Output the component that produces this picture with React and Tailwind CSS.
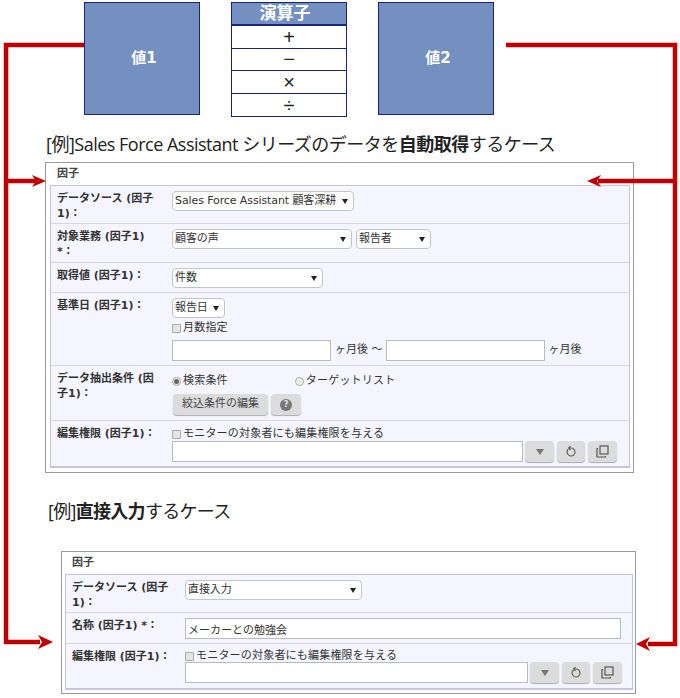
const jp = "font-['DejaVu_Sans','Noto_Sans_CJK_JP',sans-serif]";

function ValueBox({ label }) {
  return (
    <div className="flex h-[113px] w-[116px] items-center justify-center border border-[#1a237e] bg-[#7390c0] pl-[4px] text-[15px] font-bold text-white">
      {label}
    </div>
  );
}

function OperatorTable() {
  return (
    <div className="flex h-[115px] w-[116px] flex-col overflow-hidden border border-[#1a237e] bg-white">
      <div className="flex h-[23px] shrink-0 items-center justify-center border-b-2 border-[#1a237e] bg-[#7390c0] pr-[8px] text-[17px] font-bold leading-none text-white">
        演算子
      </div>
      {["+", "−", "×", "÷"].map((op, i) => (
        <div
          key={op}
          className={`flex h-[22.500px] shrink-0 items-center justify-center font-['Liberation_Sans',sans-serif] text-[20px] leading-none text-[#222] ${i < 3 ? "border-b border-[#1a237e]" : ""}`}
        >
          {op}
        </div>
      ))}
    </div>
  );
}

function Select({ value, width }) {
  return (
    <div
      className="flex h-[20px] shrink-0 items-center justify-between rounded-sm border border-[#c4c4c4] bg-white pl-[2px] pr-[5px] text-[11px] tracking-[-0.1px] text-[#333]"
      style={{ width }}
    >
      <span className="whitespace-nowrap">{value}</span>
      <svg width="6" height="5" viewBox="0 0 6 5" className="ml-1 shrink-0">
        <path d="M0 0h6L3 5z" fill="#222" />
      </svg>
    </div>
  );
}

function TextBox({ width, height = 21, value = "" }) {
  return (
    <input
      type="text"
      readOnly
      value={value}
      className="shrink-0 border border-[#bbb] bg-white pl-[2px] text-[11px] text-[#333]"
      style={{ width, height }}
    />
  );
}

function Check({ label }) {
  return (
    <div className="flex h-[14px] items-center gap-[1px] text-[11px] tracking-[0.2px] text-[#333]">
      <span className="h-[9px] w-[9px] rounded-[1px] border border-[#aaa] bg-[#e4e4e4]" />
      <span className="ml-[1px] whitespace-nowrap">{label}</span>
    </div>
  );
}

function Radio({ label, checked }) {
  return (
    <div className="flex items-center gap-[2px] text-[11px] tracking-[0.2px] text-[#333]">
      <span className="flex h-[9px] w-[9px] items-center justify-center rounded-full border border-[#aaa] bg-[#eee]">
        {checked && <span className="h-[5px] w-[5px] rounded-full bg-[#666]" />}
      </span>
      <span className="whitespace-nowrap">{label}</span>
    </div>
  );
}

function GrayButton({ width, children }) {
  return (
    <div
      className="flex h-[21px] shrink-0 items-center justify-center rounded-sm bg-[#dcdcdc] text-[11px] text-[#444] shadow-[0_1px_1px_rgba(0,0,0,0.3)]"
      style={{ width }}
    >
      {children}
    </div>
  );
}

function Row({ label, height, last, labelWidth, children }) {
  return (
    <div
      className={`flex ${last ? "" : "border-b border-[#d4d6ee]"}`}
      style={{ height }}
    >
      <div
        className="shrink-0 whitespace-nowrap pl-[6px] pt-[5px] text-[11px] font-bold leading-[15px] text-[#333]"
        style={{ width: labelWidth }}
      >
        {label}
      </div>
      <div className="flex min-w-0 flex-1 flex-col pt-[5px]">{children}</div>
    </div>
  );
}

function Permission({ inputWidth, checkOffset, inputGap }) {
  return (
    <div className="flex flex-col" style={{ marginTop: checkOffset }}>
      <Check label="モニターの対象者にも編集権限を与える" />
      <div className="flex items-center" style={{ marginTop: inputGap }}>
        <TextBox width={inputWidth} />
        <div className="ml-[2px] flex gap-[3px]">
          <GrayButton width={29}>
            <svg width="8" height="6" viewBox="0 0 8 6">
              <path d="M0 0h8L4 6z" fill="#777" />
            </svg>
          </GrayButton>
          <GrayButton width={28}>
            <svg width="12" height="12" viewBox="0 0 12 12" fill="none" stroke="#555" strokeWidth="1.1">
              <path d="M3.4 3A4 4 0 1 0 6 2H4" />
              <path d="M5.5 0.2L3.6 2l1.9 1.8" />
            </svg>
          </GrayButton>
          <GrayButton width={29}>
            <svg width="13" height="13" viewBox="0 0 13 13" fill="none" stroke="#555" strokeWidth="1.2">
              <rect x="4" y="1" width="8" height="8" />
              <path d="M2 3.5H1V12h8.500v-1" />
            </svg>
          </GrayButton>
        </div>
      </div>
    </div>
  );
}

function Panel({ outerClass, innerClass, titleClass, children }) {
  return (
    <div className={`border border-[#9a9a9a] bg-white ${outerClass}`}>
      <div className={`flex h-[22px] items-center text-[11px] font-bold text-[#444] ${titleClass}`}>因子</div>
      <div className={`border border-b-2 border-[#c3c6de] bg-[#f4f5ff] ${innerClass}`}>{children}</div>
    </div>
  );
}

function Arrows() {
  return (
    <svg className="pointer-events-none absolute inset-0" width="680" height="698" viewBox="0 0 680 698" fill="none">
      <g stroke="#c00000" strokeWidth="4.500">
        <path d="M84 45H6V642H40" />
        <path d="M6 181H36" />
        <path d="M506 45H675V644H648" />
        <path d="M675 181H598" />
      </g>
      <g fill="#c00000">
        <path d="M46 181L32 175L36 181L32 187z" />
        <path d="M53 642L38 635L42 642L38 649z" />
        <path d="M587 181L601 175L597 181L601 187z" />
        <path d="M636 644L650 637L646 644L650 651z" />
      </g>
    </svg>
  );
}

export default function App() {
  return (
    <div className={`relative h-[698px] w-[680px] overflow-hidden bg-white ${jp}`}>
      <div className="flex gap-[31px] pl-[84px] pt-[2px]">
        <ValueBox label="値1" />
        <OperatorTable />
        <ValueBox label="値2" />
      </div>

      <div className="ml-[46px] mt-[14px] h-[31px] whitespace-nowrap font-['Open_Sans','Noto_Sans_CJK_JP',sans-serif] text-[18px] leading-[26px] tracking-[-0.5px] text-[#222]">
        [例]Sales Force Assistant シリーズのデータを<b>自動取得</b>するケース
      </div>

      <Panel outerClass="ml-[45px] h-[311px] w-[589px] pl-[4px] pr-[3px]" innerClass="h-[283px]" titleClass="pl-[7px]">
        <Row label={<>データソース (因子<br />1)：</>} height={38} labelWidth={121}>
          <Select value="Sales Force Assistant 顧客深耕" width={182} />
        </Row>
        <Row label={<>対象業務 (因子1)<br />*：</>} height={39} labelWidth={121}>
          <div className="flex gap-[4px]">
            <Select value="顧客の声" width={180} />
            <Select value="報告者" width={75} />
          </div>
        </Row>
        <Row label="取得値 (因子1)：" height={30} labelWidth={121}>
          <Select value="件数" width={151} />
        </Row>
        <Row label="基準日 (因子1)：" height={73} labelWidth={121}>
          <Select value="報告日" width={53} />
          <div className="mt-[3px]">
            <Check label="月数指定" />
          </div>
          <div className="mt-[5px] flex items-center text-[11px] text-[#333]">
            <TextBox width={159} />
            <span className="ml-[4px]">ヶ月後 ～</span>
            <span className="ml-[3px]">
              <TextBox width={159} />
            </span>
            <span className="ml-[4px]">ヶ月後</span>
          </div>
        </Row>
        <Row label={<>データ抽出条件 (因<br />子1)：</>} height={55} labelWidth={121}>
          <div className="mt-[3px] flex h-[14px] items-center gap-[67px]">
            <Radio label="検索条件" checked />
            <Radio label="ターゲットリスト" />
          </div>
          <div className="ml-[1px] mt-[6px] flex gap-[3px]">
            <GrayButton width={95}>絞込条件の編集</GrayButton>
            <GrayButton width={30}>
              <span className="flex h-[12px] w-[12px] items-center justify-center rounded-full bg-[#777] text-[9px] font-bold text-[#ddd]">?</span>
            </GrayButton>
          </div>
        </Row>
        <Row label="編集権限 (因子1)：" height={46} labelWidth={121} last>
          <Permission inputWidth={351} checkOffset={1} inputGap={0} />
        </Row>
      </Panel>

      <div className="ml-[48px] mt-[25px] h-[26px] whitespace-nowrap font-['Open_Sans','Noto_Sans_CJK_JP',sans-serif] text-[18px] leading-[26px] tracking-[-0.7px] text-[#222]">
        [例]<b>直接入力</b>するケース
      </div>

      <Panel outerClass="ml-[61px] mt-[27px] h-[143px] w-[575px] pl-[3px] pr-[2px]" innerClass="h-[116px]" titleClass="pl-[7px]">
        <Row label={<>データソース (因子<br />1)：</>} height={38} labelWidth={119}>
          <Select value="直接入力" width={177} />
        </Row>
        <Row label="名称 (因子1) *：" height={31} labelWidth={119}>
          <TextBox width={436} value="メーカーとの勉強会" />
        </Row>
        <Row label="編集権限 (因子1)：" height={45} labelWidth={119} last>
          <Permission inputWidth={343} checkOffset={0} inputGap={-1} />
        </Row>
      </Panel>

      <Arrows />
    </div>
  );
}
